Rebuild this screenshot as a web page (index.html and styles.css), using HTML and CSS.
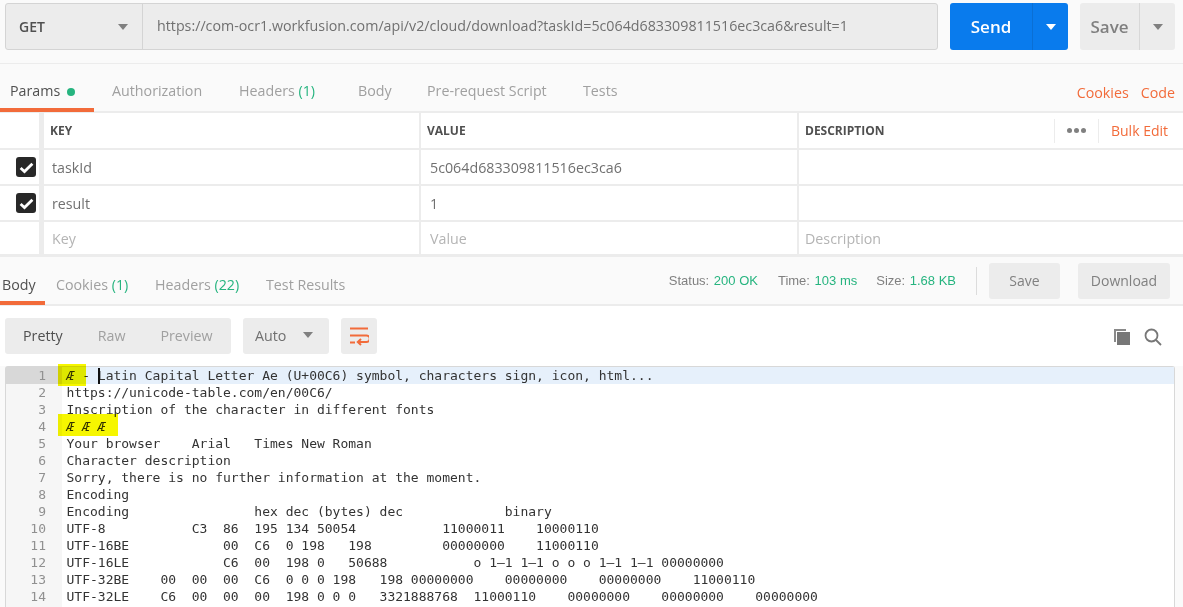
FILE: index.html
```html
<!DOCTYPE html>
<html lang="en">
<head>
    <meta charset="UTF-8">
    <title>Postman request</title>
    <link rel="stylesheet" href="styles.css">
</head>
<body>
    <div class="url-bar">
        <div class="url-box">
            <div class="method">GET<span class="caret"></span></div>
            <div class="url">https://com-ocr1.workfusion.com/api/v2/cloud/download?taskId=5c064d683309811516ec3ca6&amp;result=1</div>
        </div>
        <div class="split send">
            <div class="split-main">Send</div>
            <div class="split-arrow"><span class="caret white"></span></div>
        </div>
        <div class="split save">
            <div class="split-main">Save</div>
            <div class="split-arrow"><span class="caret"></span></div>
        </div>
    </div>

    <div class="req-tabs">
        <div class="tab active params">Params <span class="dot"></span></div>
        <div class="tab auth">Authorization</div>
        <div class="tab headers">Headers <span class="count">(1)</span></div>
        <div class="tab body-tab">Body</div>
        <div class="tab script">Pre-request Script</div>
        <div class="tab tests">Tests</div>
        <div class="req-links"><span>Cookies</span><span>Code</span></div>
    </div>

    <div class="kv">
        <div class="kv-row kv-head">
            <div class="kv-check"></div>
            <div class="kv-cell">KEY</div>
            <div class="kv-cell">VALUE</div>
            <div class="kv-cell kv-desc">DESCRIPTION
                <div class="kv-actions">
                    <span class="dots"><i></i><i></i><i></i></span>
                    <span class="bulk">Bulk Edit</span>
                </div>
            </div>
        </div>
        <div class="kv-row">
            <div class="kv-check"><span class="checkbox"><svg width="15" height="13" viewBox="0 0 14 12"><path d="M1.500 6.500l3.600 3.300L12.500 2.400" fill="none" stroke="#fff" stroke-width="2.600"/></svg></span></div>
            <div class="kv-cell">taskId</div>
            <div class="kv-cell">5c064d683309811516ec3ca6</div>
            <div class="kv-cell"></div>
        </div>
        <div class="kv-row">
            <div class="kv-check"><span class="checkbox"><svg width="15" height="13" viewBox="0 0 14 12"><path d="M1.500 6.500l3.600 3.300L12.500 2.400" fill="none" stroke="#fff" stroke-width="2.600"/></svg></span></div>
            <div class="kv-cell">result</div>
            <div class="kv-cell">1</div>
            <div class="kv-cell"></div>
        </div>
        <div class="kv-row kv-empty">
            <div class="kv-check"></div>
            <div class="kv-cell">Key</div>
            <div class="kv-cell">Value</div>
            <div class="kv-cell">Description</div>
        </div>
    </div>

    <div class="res-tabs">
        <div class="tab active res-body">Body</div>
        <div class="tab res-cookies">Cookies <span class="count">(1)</span></div>
        <div class="tab res-headers">Headers <span class="count">(22)</span></div>
        <div class="tab res-tests">Test Results</div>
        <div class="res-meta">
            <span class="stat stat-status">Status: <b>200 OK</b></span>
            <span class="stat">Time: <b>103 ms</b></span>
            <span class="stat">Size: <b>1.68 KB</b></span>
            <span class="meta-sep"></span>
            <div class="grey-btn btn-save">Save</div>
            <div class="grey-btn btn-download">Download</div>
        </div>
    </div>

    <div class="toolbar">
        <div class="view-group">
            <span class="on">Pretty</span>
            <span>Raw</span>
            <span>Preview</span>
        </div>
        <div class="format">Auto<span class="caret"></span></div>
        <div class="wrap-btn">
            <svg width="20" height="20" viewBox="0 0 20 20" fill="none" stroke="#f26b3a" stroke-width="2"><path d="M1 2.500h18M1 9.500h16.500a3.200 3.200 0 0 1 0 6.600H9M1 16.500h5M12 13l-3.200 3.100 3.200 3"/></svg>
        </div>
        <div class="tool-icons">
            <svg width="18" height="18" viewBox="0 0 18 18"><path d="M1 1h12v2H3v11H1z" fill="#8a8a8a"/><rect x="4" y="4" width="13" height="13" fill="#777"/></svg>
            <svg width="18" height="18" viewBox="0 0 18 18" fill="none" stroke="#777" stroke-width="1.800"><circle cx="7.500" cy="7.500" r="6"/><path d="M12 12l5 5"/></svg>
        </div>
    </div>

    <div class="editor">
        <div class="gutter">
            <div class="num current">1</div><div class="num">2</div><div class="num">3</div><div class="num">4</div><div class="num">5</div><div class="num">6</div><div class="num">7</div><div class="num">8</div><div class="num">9</div><div class="num">10</div><div class="num">11</div><div class="num">12</div><div class="num">13</div><div class="num">14</div>
        </div>
        <div class="code">
            <div class="line current"><em>Æ</em> - Latin Capital Letter Ae (U+00C6) symbol, characters sign, icon, html...</div>
            <div class="line">https://unicode-table.com/en/00C6/</div>
            <div class="line">Inscription of the character in different fonts</div>
            <div class="line"><em>Æ</em> <em>Æ</em> <em>Æ</em></div>
            <div class="line">Your browser    Arial   Times New Roman</div>
            <div class="line">Character description</div>
            <div class="line">Sorry, there is no further information at the moment.</div>
            <div class="line">Encoding</div>
            <div class="line">Encoding                hex dec (bytes) dec             binary</div>
            <div class="line">UTF-8           C3  86  195 134 50054           11000011    10000110</div>
            <div class="line">UTF-16BE            00  C6  0 198   198         00000000    11000110</div>
            <div class="line">UTF-16LE            C6  00  198 0   50688           o 1—1 1—1 o o o 1—1 1—1 00000000</div>
            <div class="line">UTF-32BE    00  00  00  C6  0 0 0 198   198 00000000    00000000    00000000    11000110</div>
            <div class="line">UTF-32LE    C6  00  00  00  198 0 0 0   3321888768  11000110    00000000    00000000    00000000</div>
        </div>
        <span class="cursor"></span>
        <span class="marker marker-one"></span>
        <span class="marker marker-two"></span>
    </div>
</body>
</html>
```

FILE: styles.css
```css
html, body {
    margin: 0;
    padding: 0;
    height: 607px;
    overflow: hidden;
}
body {
    font-family: "Open Sans", Arial, sans-serif;
    font-size: 14.25px;
    color: #808080;
    background-color: #fafafa;
}

.caret {
    display: inline-block;
    width: 0;
    height: 0;
    border-left: 5px solid transparent;
    border-right: 5px solid transparent;
    border-top: 6px solid #808080;
}
.caret.white {
    border-top-color: #fff;
}

/* url bar */
.url-bar {
    display: flex;
    height: 64px;
    box-sizing: border-box;
    padding: 3px 8px 13px 5px;
    border-bottom: 1px solid #ececec;
}
.url-box {
    display: flex;
    width: 933px;
    box-sizing: border-box;
    background-color: #ececec;
    border: 1px solid #d4d4d4;
    border-radius: 3px;
}
.method {
    width: 137px;
    flex: none;
    box-sizing: border-box;
    padding: 0 14px 0 13px;
    display: flex;
    align-items: center;
    justify-content: space-between;
    border-right: 1px solid #d4d4d4;
    font-weight: 600;
    font-size: 14px;
    color: #505050;
}
.url {
    padding-left: 14px;
    line-height: 44px;
    color: #707070;
    white-space: nowrap;
}
.split {
    display: flex;
    border-radius: 3px;
    font-size: 17px;
    font-weight: 600;
}
.send {
    width: 118px;
    margin-left: 12px;
    background-color: #097bed;
    color: #fff;
}
.save {
    width: 95px;
    margin-left: 12px;
    background-color: #ececec;
    color: #808080;
}
.split-main {
    flex: 1;
    display: flex;
    align-items: center;
    justify-content: center;
}
.split-arrow {
    width: 35px;
    display: flex;
    align-items: center;
    justify-content: center;
    border-left: 1px solid #0a6fd4;
}
.save .split-arrow {
    border-left-color: #d8d8d8;
}

/* tabs */
.req-tabs, .res-tabs {
    display: flex;
    position: relative;
    box-sizing: border-box;
    border-bottom: 2px solid #ececec;
}
.req-tabs {
    height: 49px;
}
.tab {
    color: #a0a0a0;
    padding-top: 17px;
    white-space: nowrap;
}
.tab.active {
    color: #505050;
    border-bottom: 4px solid #f26b3a;
    margin-bottom: -1px;
}
.count {
    color: #26b47f;
}
.dot {
    display: inline-block;
    width: 8px;
    height: 8px;
    margin-left: 3px;
    border-radius: 50%;
    background-color: #26b47f;
}
.params { width: 84px; padding-left: 10px; }
.auth { margin-left: 18px; width: 127px; }
.headers { width: 119px; }
.body-tab { width: 69px; }
.script { width: 156px; }
.req-links {
    margin-left: auto;
    padding: 19px 8px 0 0;
    display: flex;
    gap: 12px;
    color: #f26b3a;
}

/* key value table */
.kv {
    background-color: #fff;
}
.kv-row {
    display: grid;
    grid-template-columns: 44px 377px 378px 1fr;
    height: 36px;
    box-sizing: border-box;
    border-bottom: 2px solid #ececec;
    color: #707070;
}
.kv-head {
    height: 37px;
    font-size: 12px;
    font-weight: 700;
    color: #505050;
}
.kv-empty {
    height: 35px;
    border-bottom-width: 3px;
    color: #b4b4b4;
}
.kv-check {
    display: flex;
    align-items: center;
    justify-content: flex-end;
    padding-right: 3px;
    border-right: 5px solid #ececec;
}
.checkbox {
    width: 20px;
    height: 20px;
    border-radius: 3px;
    background-color: #282828;
    display: flex;
    align-items: center;
    justify-content: center;
}
.kv-cell {
    display: flex;
    align-items: center;
    padding-left: 8px;
    border-right: 2px solid #ececec;
}
.kv-cell + .kv-cell {
    padding-left: 9px;
}
.kv-row .kv-cell:last-child {
    border-right: 0;
    padding-left: 6px;
}
.kv-head .kv-cell {
    padding-left: 6px;
}
.kv-desc {
    justify-content: space-between;
}
.kv-actions {
    display: flex;
    align-items: center;
    height: 24px;
    font-size: 14px;
    font-weight: 400;
    color: #f26b3a;
}
.dots {
    display: flex;
    gap: 2px;
    height: 100%;
    align-items: center;
    padding: 0 12px;
    border-left: 1px solid #ececec;
    border-right: 1px solid #ececec;
}
.dots i {
    width: 5px;
    height: 5px;
    border-radius: 50%;
    background-color: #808080;
}
.bulk {
    padding: 0 15px 0 12px;
}

/* response */
.res-tabs {
    height: 48px;
    margin-top: 1px;
}
.res-body { width: 45px; padding-left: 2px; box-sizing: border-box; }
.res-cookies { margin-left: 11px; width: 99px; }
.res-headers { width: 111px; }
.res-meta {
    margin-left: auto;
    padding: 5px 13px 0 0;
    display: flex;
    align-items: flex-start;
    font-family: "Liberation Sans", Arial, sans-serif;
    font-size: 13px;
}
.stat {
    margin-right: 19px;
    line-height: 36px;
    color: #808080;
}
.stat-status {
    margin-right: 20px;
}
.stat b {
    font-weight: 400;
    color: #26b47f;
    margin-left: 1px;
}
.meta-sep {
    width: 1px;
    height: 28px;
    margin: 4px 12px 0 1px;
    background-color: #dcdcdc;
}
.grey-btn {
    height: 36px;
    line-height: 36px;
    text-align: center;
    border-radius: 3px;
    background-color: #ececec;
    font-family: "Open Sans", Arial, sans-serif;
    font-size: 14px;
    color: #808080;
}
.btn-save { width: 71px; margin-right: 18px; }
.btn-download { width: 92px; }

.toolbar {
    display: flex;
    align-items: flex-start;
    height: 60px;
    box-sizing: border-box;
    padding: 12px 8px 0 5px;
    background-color: #fff;
}
.view-group, .format, .wrap-btn {
    height: 36px;
    display: flex;
    align-items: center;
    background-color: #ececec;
    border-radius: 3px;
}
.view-group, .format {
    padding-bottom: 2px;
    height: 34px;
}
.view-group {
    width: 226px;
    box-sizing: content-box;
    width: 208px;
    padding-left: 18px;
    gap: 35px;
    color: #a0a0a0;
}
.view-group .on {
    color: #505050;
}
.format {
    width: 58px;
    margin-left: 12px;
    padding-left: 12px;
    padding-right: 16px;
    justify-content: space-between;
    color: #707070;
}
.wrap-btn {
    width: 36px;
    margin-left: 12px;
    justify-content: center;
}
.tool-icons {
    margin-left: auto;
    display: flex;
    gap: 13px;
    padding: 10px 13px 0 0;
}

/* code */
.editor {
    display: flex;
    position: relative;
    margin-left: 5px;
    width: 1170px;
    height: 241px;
    box-sizing: border-box;
    background-color: #fff;
    border: 1px solid #d8d8d8;
    border-bottom: 0;
    border-radius: 3px 3px 0 0;
    font-family: "DejaVu Sans Mono", monospace;
    font-size: 13px;
    line-height: 17px;
}
.gutter {
    width: 56px;
    flex: none;
    background-color: #f6f6f6;
    color: #909090;
}
.num {
    height: 17px;
    text-align: right;
    padding-right: 16px;
}
.num.current {
    background-color: #d8d8d8;
}
.code {
    flex: 1;
    color: #333;
}
.line {
    height: 17px;
    padding-left: 4.500px;
    white-space: pre;
}
.line.current {
    background-color: #e6f0fb;
}
.line em {
    font-style: italic;
}
.cursor {
    position: absolute;
    left: 92px;
    top: 1px;
    width: 2px;
    height: 16px;
    background-color: #111;
}
.marker {
    position: absolute;
    left: 52px;
    background-color: #f6f600;
    mix-blend-mode: multiply;
}
.marker-one {
    top: -3px;
    width: 28px;
    height: 22px;
}
.marker-two {
    top: 47px;
    width: 60px;
    height: 22px;
}
```
